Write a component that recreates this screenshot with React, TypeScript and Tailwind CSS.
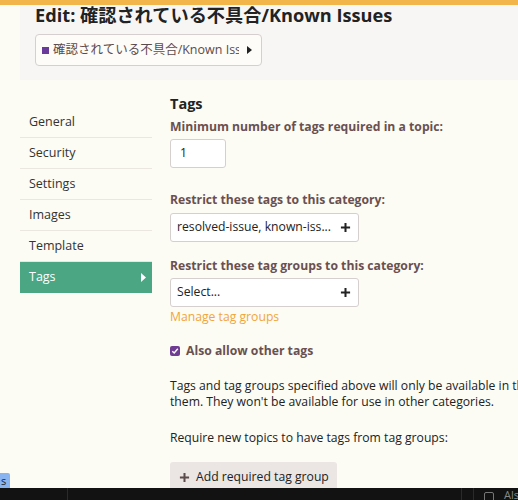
import React from "react";

const items = ["General", "Security", "Settings", "Images", "Template"];

function Plus({ className = "" }: { className?: string }) {
  return (
    <svg viewBox="0 0 12 12" className={className} width="11" height="11">
      <path d="M6 1v10M1 6h10" stroke="currentColor" strokeWidth="2.2" />
    </svg>
  );
}

export default function App() {
  return (
    <div className="relative w-[518px] h-[500px] overflow-hidden bg-[#fcfcf4] font-['Open_Sans',sans-serif] text-[#222]">
      <div className="absolute left-0 top-0 w-full h-[5px] bg-[#f2b54a]" />
      <div className="ml-[20px] h-[80px] bg-[#f8f6f5] pl-[15px] pt-[2px]">
        <h1 className="text-[18.2px] leading-[26px] font-bold whitespace-nowrap text-[#222] font-['Open_Sans','Noto_Sans_CJK_JP',sans-serif]">
          Edit: 確認されている不具合/Known Issues
        </h1>
        <div className="mt-[6px] w-[227px] h-[32px] border border-[#d6cfcf] rounded-[4px] bg-[#fdfcf8] flex items-center pl-[6px]">
          <span className="w-[7px] h-[7px] bg-[#6a3a9a] shrink-0" />
          <span className="ml-[4px] w-[186px] overflow-hidden whitespace-nowrap text-[12.5px] text-[#5c4b4b] font-['Open_Sans','Noto_Sans_CJK_JP',sans-serif]">
            確認されている不具合/Known Issues
          </span>
          <svg width="5" height="8" viewBox="0 0 5 8" className="ml-[8px] text-[#222]">
            <path d="M0 0L5 4L0 8Z" fill="currentColor" />
          </svg>
        </div>
      </div>
      <div className="flex pl-[20px]">
        <div className="w-[132px] pt-[27px] shrink-0">
          {items.map((it) => (
            <div
              key={it}
              className="h-[31px] border-b border-[#e9e7df] flex items-center pl-[9px] text-[12.5px] text-[#333]"
            >
              {it}
            </div>
          ))}
          <div className="h-[31px] bg-[#4aa683] flex items-center justify-between pl-[9px] pr-[6px] text-[12.5px] text-white">
            <span>Tags</span>
            <svg width="5" height="9" viewBox="0 0 5 9">
              <path d="M0 0L5 4.5L0 9Z" fill="white" />
            </svg>
          </div>
        </div>
        <div className="ml-[18px] pt-[14px] w-[560px] shrink-0">
          <h3 className="text-[14.5px] leading-[20px] font-bold text-[#222]">Tags</h3>
          <div className="mt-[3px] text-[12.2px] leading-[20px] font-bold text-[#6a5050]">
            Minimum number of tags required in a topic:
          </div>
          <div className="mt-[2px] w-[56px] h-[29px] border border-[#d6cfcf] rounded-[3px] bg-white flex items-center pl-[9px] text-[12.2px]">
            1
          </div>
          <div className="mt-[22px] text-[12.2px] leading-[20px] font-bold text-[#6a5050]">
            Restrict these tags to this category:
          </div>
          <div className="mt-[3px] w-[189px] h-[29px] border border-[#d6cfcf] rounded-[3px] bg-white flex items-center justify-between pl-[6px] pr-[7px] text-[12.2px] whitespace-nowrap">
            <span>resolved-issue, known-iss...</span>
            <Plus />
          </div>
          <div className="mt-[14px] text-[12.2px] leading-[20px] font-bold text-[#6a5050]">
            Restrict these tag groups to this category:
          </div>
          <div className="mt-[2px] w-[189px] h-[29px] border border-[#d6cfcf] rounded-[3px] bg-white flex items-center justify-between pl-[6px] pr-[7px] text-[12.2px]">
            <span>Select...</span>
            <Plus />
          </div>
          <div className="mt-[1px] text-[12.2px] leading-[18px] text-[#f1a53b]">Manage tag groups</div>
          <div className="mt-[15px] flex items-center h-[20px]">
            <span className="w-[10px] h-[10px] rounded-[2px] bg-[#6f3d91] flex items-center justify-center">
              <svg width="8" height="8" viewBox="0 0 8 8">
                <path d="M1.3 4.2L3.2 6L6.8 1.8" stroke="white" strokeWidth="1.4" fill="none" />
              </svg>
            </span>
            <span className="ml-[6px] text-[12.2px] font-bold text-[#6a5050]">Also allow other tags</span>
          </div>
          <div className="mt-[17px] text-[12.2px] leading-[16px] whitespace-nowrap">
            <div>Tags and tag groups specified above will only be available in this category and other categories that also specify</div>
            <div>them. They won't be available for use in other categories.</div>
          </div>
          <div className="mt-[20px] text-[12.2px] leading-[16px]">Require new topics to have tags from tag groups:</div>
          <div className="mt-[16px] w-[167px] h-[30px] bg-[#ebe6e3] rounded-[3px] flex items-center pl-[9px] text-[12.2px] text-[#222] whitespace-nowrap">
            <Plus className="text-[#5c4b4b]" />
            <span className="ml-[6px]">Add required tag group</span>
          </div>
        </div>
      </div>
      <div className="absolute left-0 top-[473px] w-[10px] h-[15px] bg-[#8ab4f0] rounded-tr-[2px] text-[11px] leading-[15px] text-[#222] pl-[1px]">s</div>
      <div className="absolute left-0 top-[488px] w-full h-[12px] bg-[#121212] flex items-center">
        <div className="absolute left-[67px] top-0 w-px h-full bg-[#2a2a2a]" />
        <div className="absolute left-[461px] top-0 w-px h-full bg-[#2a2a2a]" />
        <div className="absolute left-[473px] top-0 w-px h-full bg-[#2a2a2a]" />
        <div className="absolute left-[484px] top-[4px] w-[10px] h-[10px] border border-[#777] rounded-[2px]" />
        <div className="absolute left-[504px] top-[1px] text-[11px] leading-[12px] text-[#888]">Also</div>
      </div>
    </div>
  );
}
